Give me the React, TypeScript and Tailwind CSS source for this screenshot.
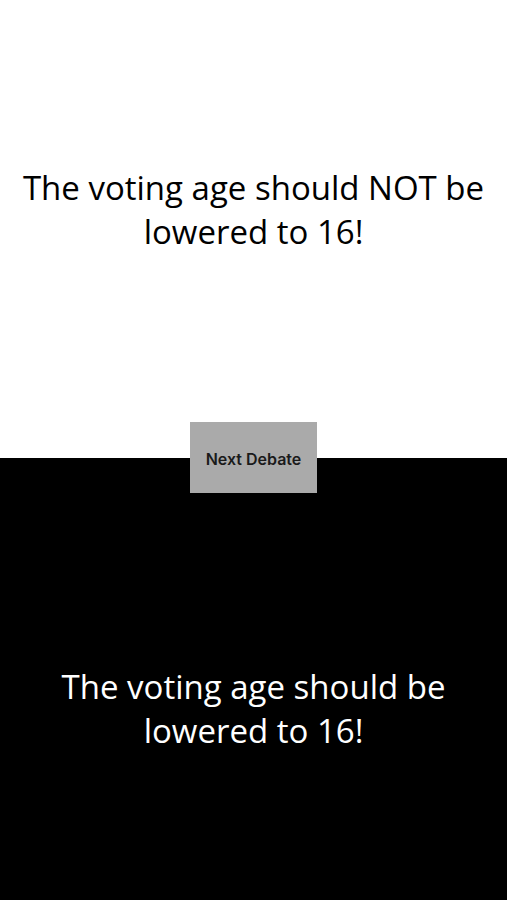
import React from 'react';

const App = () => {
  return (
    <div className="relative flex flex-col h-[900px] w-full font-['Open_Sans',sans-serif]">
      {/* Against side */}
      <div className="h-[458px] bg-white flex items-center justify-center pb-[38px] px-3">
        <p className="text-[33px] leading-[44px] text-black text-center">
          The voting age should NOT be lowered to 16!
        </p>
      </div>

      {/* For side */}
      <div className="flex-1 bg-black flex items-center justify-center pt-[60px] px-[56px]">
        <p className="text-[33px] leading-[44px] text-white text-center">
          The voting age should be lowered to 16!
        </p>
      </div>

      <button className="absolute left-[190px] top-[422px] w-[127px] h-[71px] pt-[2px] bg-[#aaaaaa] text-[16px] font-semibold text-[#1a1a1a] font-['Inter',sans-serif]">
        Next Debate
      </button>
    </div>
  );
};

export default App;
